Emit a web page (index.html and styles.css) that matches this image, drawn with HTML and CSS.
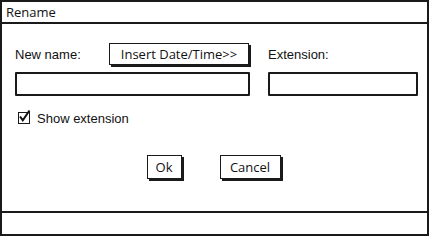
FILE: index.html
```html
<!DOCTYPE html>
<html>
<head>
<meta charset="utf-8">
<link rel="stylesheet" href="styles.css">
</head>
<body>
<div class="window">
  <div class="titlebar">Rename</div>
  <div class="content">
    <div class="grid">
      <div class="row-label">
        <span class="label">New name:</span>
        <button class="btn btn-insert">Insert Date/Time&gt;&gt;</button>
      </div>
      <div class="row-label">
        <span class="label">Extension:</span>
      </div>
      <div class="input"></div>
      <div class="input"></div>
    </div>
    <div class="check-row">
      <span class="checkbox">
        <svg width="12" height="12" viewBox="0 0 12 12"><path d="M2 5.5 L4.8 9.2 L11.5 -0.5" fill="none" stroke="#111" stroke-width="2"/></svg>
      </span>
      <span class="label">Show extension</span>
    </div>
    <div class="actions">
      <button class="btn btn-ok">Ok</button>
      <button class="btn btn-cancel">Cancel</button>
    </div>
  </div>
  <div class="statusbar"></div>
</div>
</body>
</html>
```
FILE: styles.css
```css
html, body {
  margin: 0;
  padding: 0;
  background: #fff;
}
body {
  font-family: "Liberation Sans", Arial, sans-serif;
  font-size: 13px;
  color: #111;
}
.window {
  width: 429px;
  height: 236px;
  box-sizing: border-box;
  border: 2px solid #1a1a1a;
  display: flex;
  flex-direction: column;
}
.titlebar {
  height: 20px;
  line-height: 20px;
  border-bottom: 2px solid #1a1a1a;
  padding-left: 4px;
  font-family: "Open Sans", "Liberation Sans", sans-serif;
  font-size: 13px;
}
.content {
  flex: 1;
  padding: 19px 9px 0 13px;
  display: flex;
  flex-direction: column;
}
.grid {
  display: grid;
  grid-template-columns: 235px 150px;
  column-gap: 18px;
  row-gap: 7px;
}
.row-label {
  display: flex;
  align-items: center;
  height: 22px;
}
.row-label .label {
  padding-top: 1px;
}
.btn {
  font-family: "Open Sans", "Liberation Sans", sans-serif;
  font-size: 13px;
  color: #111;
  background: #fff;
  border: 1.5px solid #1a1a1a;
  box-shadow: 2px 2px 0 #1a1a1a;
  padding: 0;
  margin: 0;
  height: 22px;
  box-sizing: border-box;
  line-height: 18px;
}
.btn-insert {
  margin-left: auto;
  margin-right: 1px;
  width: 140px;
}
.input {
  height: 24px;
  box-sizing: border-box;
  border: 2px solid #1a1a1a;
  border-radius: 1px;
}
.check-row {
  display: flex;
  align-items: center;
  margin-top: 15px;
  margin-left: 3px;
  height: 14px;
}
.checkbox {
  width: 12px;
  height: 12px;
  box-sizing: border-box;
  border: 1.5px solid #1a1a1a;
  display: flex;
  align-items: flex-end;
  justify-content: flex-start;
  margin-right: 7px;
  overflow: visible;
}
.checkbox svg {
  margin: -3px 0 0 -1px;
  overflow: visible;
}
.actions {
  display: flex;
  justify-content: center;
  gap: 38px;
  margin-top: 30px;
  padding-right: 6px;
}
.btn-ok {
  width: 35px;
  height: 24px;
}
.btn-cancel {
  width: 61px;
  height: 24px;
}
.statusbar {
  height: 21px;
  border-top: 2px solid #1a1a1a;
}
```
